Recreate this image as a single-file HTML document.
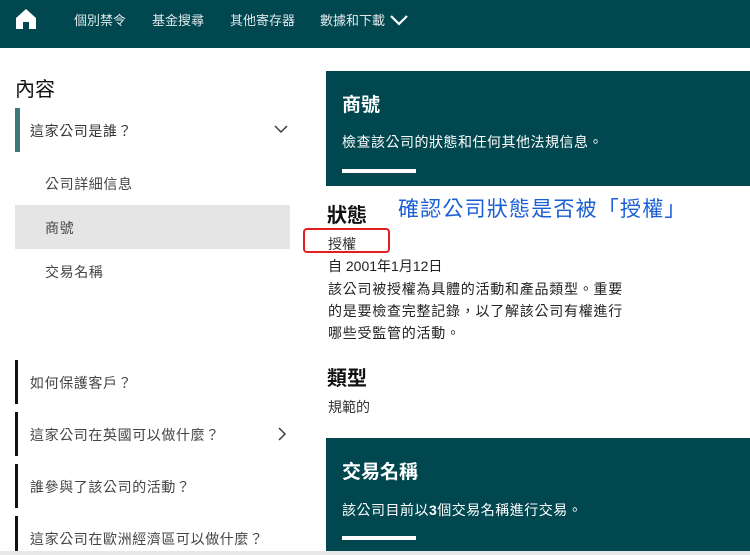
<!DOCTYPE html>
<html><head><meta charset="utf-8"><style>
*{margin:0;padding:0;box-sizing:border-box}
body{width:750px;height:555px;overflow:hidden;background:#fff;font-family:"Liberation Sans","Noto Sans CJK TC",sans-serif;color:#222;position:relative}
.a{position:absolute;white-space:nowrap}
.nav{position:absolute;left:0;top:0;width:750px;height:48px;background:#004750}
.nav .t{color:#e0e8ea;font-size:13px;top:10px}
.panel{position:absolute;left:326px;width:424px;background:#004750;color:#fff}
.bar{position:absolute;left:15px;width:3px;background:#111}
.li{font-size:14px;color:#444;letter-spacing:0.6px}
</style></head><body>
<div class="nav">
<svg class="a" style="left:15px;top:8px" width="22" height="22" viewBox="0 0 22 22"><path d="M1 10 L11 1 L21 10 V21 H14 V14 H8 V21 H1 Z" fill="#fff"/></svg>
<div class="a t" style="left:74px">個別禁令</div>
<div class="a t" style="left:152px">基金搜尋</div>
<div class="a t" style="left:230px">其他寄存器</div>
<div class="a t" style="left:320px">數據和下載</div>
<svg class="a" style="left:389px;top:13px" width="20" height="14" viewBox="0 0 20 14"><path d="M2 3 L10 11 L18 3" stroke="#fff" stroke-width="2.2" fill="none"/></svg>
</div>

<div class="a" style="left:15px;top:73px;font-size:20px;color:#111">內容</div>
<div class="a" style="left:15px;top:108px;width:5px;height:44px;background:#3c7a7a"></div>
<div class="a li" style="left:30px;top:121px;color:#333">這家公司是誰？</div>
<svg class="a" style="left:274px;top:124px" width="14" height="10" viewBox="0 0 14 10"><path d="M1 2 L7 8 L13 2" stroke="#333" stroke-width="1.4" fill="none"/></svg>
<div class="a li" style="left:45px;top:174px">公司詳細信息</div>
<div class="a" style="left:15px;top:205px;width:275px;height:44px;background:#e5e5e5"></div>
<div class="a li" style="left:45px;top:218px">商號</div>
<div class="a li" style="left:45px;top:262px">交易名稱</div>

<div class="bar" style="top:360px;height:44px"></div>
<div class="a li" style="left:30px;top:373px">如何保護客戶？</div>
<div class="bar" style="top:412px;height:44px"></div>
<div class="a li" style="left:30px;top:425px">這家公司在英國可以做什麼？</div>
<svg class="a" style="left:277px;top:427px" width="10" height="14" viewBox="0 0 10 14"><path d="M2 1 L8 7 L2 13" stroke="#333" stroke-width="1.4" fill="none"/></svg>
<div class="bar" style="top:464px;height:44px"></div>
<div class="a li" style="left:30px;top:477px">誰參與了該公司的活動？</div>
<div class="bar" style="top:516px;height:39px"></div>
<div class="a li" style="left:30px;top:529px">這家公司在歐洲經濟區可以做什麼？</div>

<div class="panel" style="top:71px;height:115px">
<div class="a" style="left:16px;top:19px;font-size:19px;font-weight:bold">商號</div>
<div class="a" style="left:16px;top:61px;font-size:14px;letter-spacing:0.5px">檢查該公司的狀態和任何其他法規信息。</div>
<div class="a" style="left:16px;top:98px;width:74px;height:4px;background:#fff"></div>
</div>

<div class="a" style="left:327px;top:199px;font-size:20px;color:#111;font-weight:bold">狀態</div>
<div class="a" style="left:398px;top:193px;font-size:21px;color:#1a5fd6;letter-spacing:1.2px">確認公司狀態是否被「授權」</div>
<div class="a" style="left:303px;top:228px;width:87px;height:25px;border:2px solid #e02020;border-radius:4px"></div>
<div class="a" style="left:328px;top:234px;font-size:14px;color:#333">授權</div>
<div class="a" style="left:328px;top:256px;font-size:14px;color:#222">自 2001年1月12日</div>
<div class="a" style="left:328px;top:278px;font-size:14px;line-height:22px;color:#222;white-space:normal;width:298px;letter-spacing:0.75px">該公司被授權為具體的活動和產品類型。重要的是要檢查完整記錄，以了解該公司有權進行哪些受監管的活動。</div>
<div class="a" style="left:327px;top:362px;font-size:20px;color:#111;font-weight:bold">類型</div>
<div class="a" style="left:328px;top:397px;font-size:14px;color:#333">規範的</div>

<div class="panel" style="top:438px;height:113px">
<div class="a" style="left:16px;top:19px;font-size:19px;font-weight:bold">交易名稱</div>
<div class="a" style="left:16px;top:62px;font-size:14px;letter-spacing:0.5px">該公司目前以<b>3</b>個交易名稱進行交易。</div>
<div class="a" style="left:16px;top:98px;width:74px;height:4px;background:#fff"></div>
</div>
<div class="a" style="left:0;top:551px;width:750px;height:4px;background:#e8e8e8"></div>
</body></html>
